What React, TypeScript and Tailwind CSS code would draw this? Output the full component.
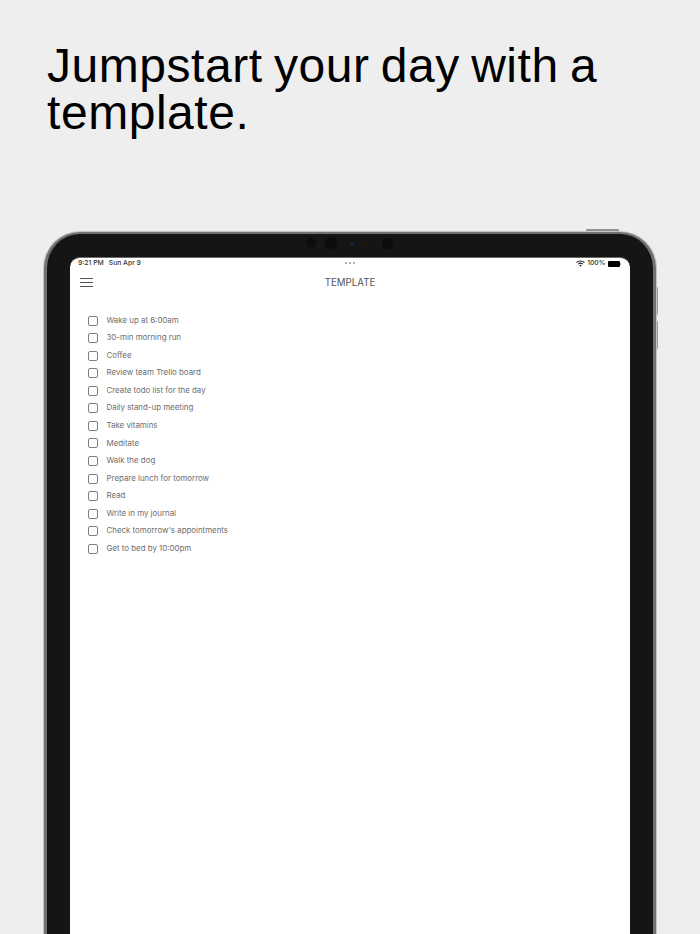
const items = [
  "Wake up at 6:00am",
  "30-min morning run",
  "Coffee",
  "Review team Trello board",
  "Create todo list for the day",
  "Daily stand-up meeting",
  "Take vitamins",
  "Meditate",
  "Walk the dog",
  "Prepare lunch for tomorrow",
  "Read",
  "Write in my journal",
  "Check tomorrow's appointments",
  "Get to bed by 10:00pm",
];

export default function App() {
  return (
    <div className="h-[934px] w-[700px] overflow-hidden bg-[#eeeeee] font-['Inter',sans-serif]">
      <h1 className="px-[47px] pt-[42px] font-['Liberation_Sans',sans-serif] text-[48px] leading-[47px] font-normal tracking-[0.55px] [word-spacing:-2.6px] text-black">
        Jumpstart your day with a template.
      </h1>
      <div className="relative mx-[44px] mt-[96px]">
        <div className="absolute right-[37px] top-[-3px] h-[4px] w-[33px] rounded-t-[1px] bg-[#8f8f96]" />
        <div className="absolute right-[-2px] top-[55px] h-[28px] w-[3px] rounded-r-[1px] bg-[#9a9aa0]" />
        <div className="absolute right-[-2px] top-[89px] h-[28px] w-[3px] rounded-r-[1px] bg-[#9a9aa0]" />
        <div className="relative h-[710px] rounded-t-[36px] border-x-[3px] border-t-[2px] border-[#707075] bg-[#151515] px-[23px] pt-[23px] shadow-[0_0_0_1px_#c4c4c8]">
          <div className="absolute left-[259px] top-[3px] flex items-center gap-[9px]">
            <div className="h-[10px] w-[10px] rounded-full bg-[#0c0c0c]" />
            <div className="h-[12px] w-[12px] rounded-full bg-[#0b0b0b]" />
            <div className="flex w-[12px] justify-center"><div className="h-[3px] w-[4px] rounded-full bg-[#10254f]" /></div>
            <div className="-ml-[3px] flex w-[6px] justify-center"><div className="h-[2px] w-[2px] rounded-full bg-[#2a1414]" /></div>
            <div className="ml-[3px] h-[11px] w-[11px] rounded-full bg-[#0b0b0b]" />
          </div>
          <div className="h-[687px] rounded-t-[10px] border-t border-[#6a6a6a] bg-white">
            <div className="relative flex h-[11px] items-center justify-between pl-[8px] pr-[9px] text-[6.8px] font-medium text-[#333333]">
              <div className="flex gap-[5px]"><span>9:21 PM</span><span>Sun Apr 9</span></div>
              <div className="absolute left-1/2 top-[4px] flex -translate-x-1/2 gap-[2px]">
                <div className="h-[2px] w-[2px] rounded-full bg-[#999999]" />
                <div className="h-[2px] w-[2px] rounded-full bg-[#999999]" />
                <div className="h-[2px] w-[2px] rounded-full bg-[#999999]" />
              </div>
              <div className="flex items-center gap-[2px]">
                <svg width="9" height="7" viewBox="0 0 18 14">
                  <path d="M1 5 C5.5 1 12.5 1 17 5" fill="none" stroke="#222222" strokeWidth="2.4" />
                  <path d="M4.5 8.2 C7 6 11 6 13.5 8.2" fill="none" stroke="#222222" strokeWidth="2.4" />
                  <path d="M6.8 11 L9 13.5 L11.2 11 C10 9.8 8 9.8 6.8 11Z" fill="#222222" />
                </svg>
                <span>100%</span>
                <div className="flex items-center gap-[0.5px]">
                  <div className="h-[6px] w-[12px] rounded-[1px] bg-black" />
                  <div className="h-[2px] w-[1px] bg-[#999999]" />
                </div>
              </div>
            </div>
            <div className="relative flex h-[29px] items-center justify-center">
              <div className="absolute left-[10px] top-[9px] flex w-[13px] flex-col gap-[3px]">
                <div className="h-[1px] bg-[#555555]" />
                <div className="h-[1px] bg-[#555555]" />
                <div className="h-[1px] bg-[#555555]" />
              </div>
              <span className="text-[9.7px] text-[#555555]">TEMPLATE</span>
            </div>
            <ul className="flex flex-col pl-[18px] pt-[14px]">
              {items.map((t) => (
                <li key={t} className="flex h-[17.54px] items-center gap-[8.5px]">
                  <div className="h-[10px] w-[10px] rounded-[2px] border border-[#808080]" />
                  <span className="text-[7.9px] text-[#6e6e6e]">{t}</span>
                </li>
              ))}
            </ul>
          </div>
        </div>
      </div>
    </div>
  );
}
